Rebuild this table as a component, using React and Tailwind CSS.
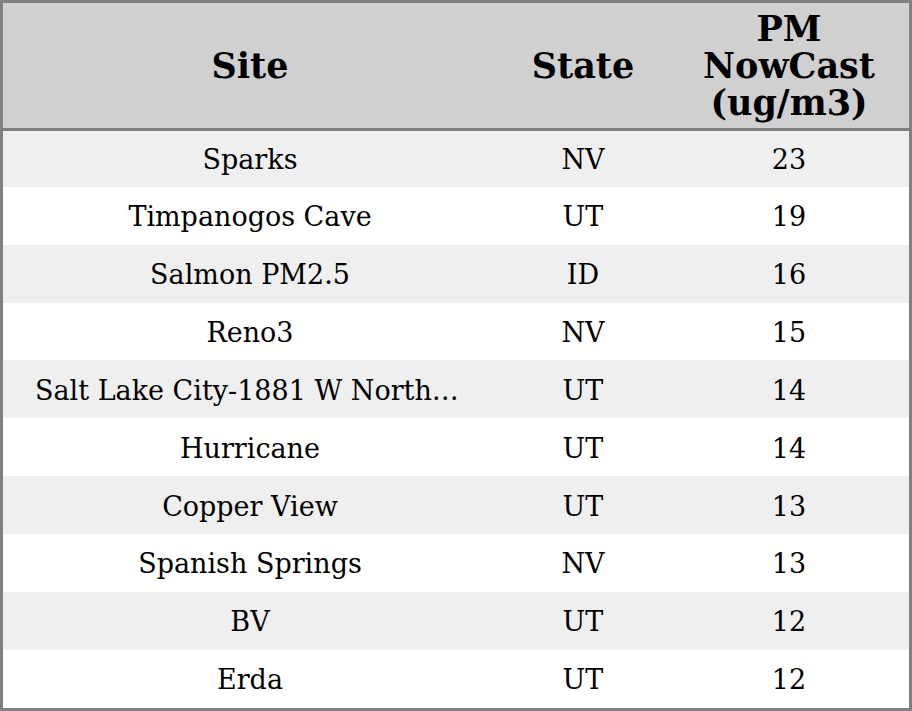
import React from "react";

const rows = [
  ["Sparks", "NV", "23"],
  ["Timpanogos Cave", "UT", "19"],
  ["Salmon PM2.5", "ID", "16"],
  ["Reno3", "NV", "15"],
  ["Salt Lake City-1881 W Northtemple", "UT", "14"],
  ["Hurricane", "UT", "14"],
  ["Copper View", "UT", "13"],
  ["Spanish Springs", "NV", "13"],
  ["BV", "UT", "12"],
  ["Erda", "UT", "12"],
];

export default function App() {
  return (
    <div
      className="w-[912px] h-[711px] border-[3px] border-[#808080] bg-white text-black flex flex-col overflow-hidden"
      style={{ fontFamily: '"DejaVu Serif", serif' }}
    >
      <div className="grid grid-cols-[494px_172px_1fr] h-[125px] bg-[#d0d0d0] border-b-[3px] border-[#808080] box-content shrink-0 font-bold text-[35px] leading-[37px]">
        <div className="flex items-center justify-center">Site</div>
        <div className="flex items-center justify-center">State</div>
        <div className="flex items-center justify-center text-center">
          PM<br />NowCast<br />(ug/m3)
        </div>
      </div>
      <div className="flex flex-col flex-1">
        {rows.map((r, i) => (
          <div
            key={i}
            className={`grid grid-cols-[494px_172px_1fr] items-center pt-[3px] text-[27px] ${i === 0 ? "h-[55.7px] shrink-0" : "flex-1"} ${i % 2 === 0 ? "bg-[#efefef]" : "bg-white"}`}
          >
            <div className="px-[32px] text-center truncate">{r[0]}</div>
            <div className="text-center">{r[1]}</div>
            <div className="text-center">{r[2]}</div>
          </div>
        ))}
      </div>
    </div>
  );
}
